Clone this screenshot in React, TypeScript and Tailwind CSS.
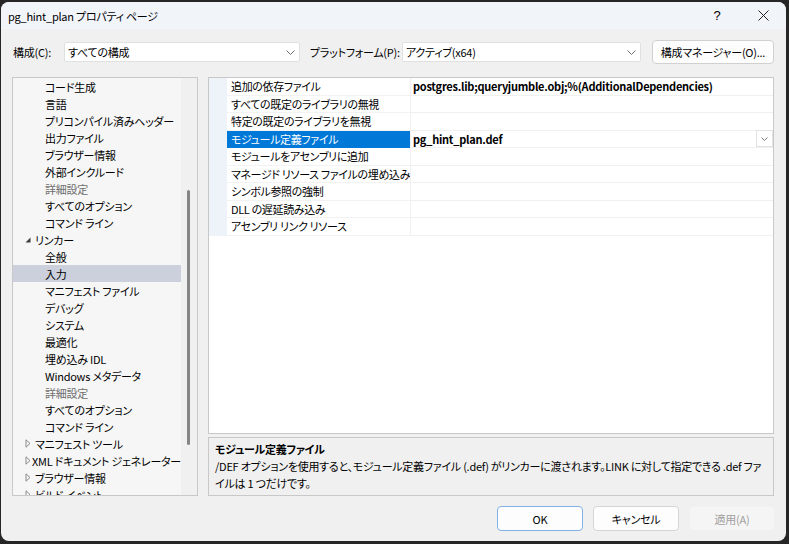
import React from "react";

const FONT = "font-['Noto_Sans_CJK_JP','Noto_Sans',sans-serif] [font-feature-settings:'palt'_1]";

type TreeItem = { t: string; l: 1 | 2; gray?: boolean; exp?: boolean; col?: boolean; sel?: boolean };

const tree: TreeItem[] = [
  { t: "コード生成", l: 2 },
  { t: "言語", l: 2 },
  { t: "プリコンパイル済みヘッダー", l: 2 },
  { t: "出力ファイル", l: 2 },
  { t: "ブラウザー情報", l: 2 },
  { t: "外部インクルード", l: 2 },
  { t: "詳細設定", l: 2, gray: true },
  { t: "すべてのオプション", l: 2 },
  { t: "コマンド ライン", l: 2 },
  { t: "リンカー", l: 1, exp: true },
  { t: "全般", l: 2 },
  { t: "入力", l: 2, sel: true },
  { t: "マニフェスト ファイル", l: 2 },
  { t: "デバッグ", l: 2 },
  { t: "システム", l: 2 },
  { t: "最適化", l: 2 },
  { t: "埋め込み IDL", l: 2 },
  { t: "Windows メタデータ", l: 2 },
  { t: "詳細設定", l: 2, gray: true },
  { t: "すべてのオプション", l: 2 },
  { t: "コマンド ライン", l: 2 },
  { t: "マニフェスト ツール", l: 1, col: true },
  { t: "XML ドキュメント ジェネレーター", l: 1, col: true },
  { t: "ブラウザー情報", l: 1, col: true },
  { t: "ビルド イベント", l: 1, col: true },
];

const props: { n: string; v: string; sel?: boolean }[] = [
  { n: "追加の依存ファイル", v: "postgres.lib;queryjumble.obj;%(AdditionalDependencies)" },
  { n: "すべての既定のライブラリの無視", v: "" },
  { n: "特定の既定のライブラリを無視", v: "" },
  { n: "モジュール定義ファイル", v: "pg_hint_plan.def", sel: true },
  { n: "モジュールをアセンブリに追加", v: "" },
  { n: "マネージド リソース ファイルの埋め込み", v: "" },
  { n: "シンボル参照の強制", v: "" },
  { n: "DLL の遅延読み込み", v: "" },
  { n: "アセンブリ リンク リソース", v: "" },
];

function Chevron() {
  return (
    <svg width="9" height="5" viewBox="0 0 9 5" className="shrink-0">
      <polyline points="0.5,0.5 4.5,4.5 8.5,0.5" fill="none" stroke="#707070" strokeWidth="1" />
    </svg>
  );
}

const T = "text-[11px] leading-[16px] tracking-[-0.25px]";

function Select({ w, text }: { w: string; text: string }) {
  return (
    <div className={`${w} h-[20px] bg-white border border-[#e0e0e0] rounded-[2px] flex items-center justify-between pl-[3px] pr-[4px]`}>
      <span className={`${T} text-black whitespace-nowrap`}>{text}</span>
      <Chevron />
    </div>
  );
}

export default function App() {
  return (
    <div className={`w-[789px] h-[544px] bg-[#262626] pt-[2px] pl-[1px] overflow-hidden ${FONT}`}>
      <div className="w-[785px] h-[539px] rounded-[8px] bg-[#f0f0f0] flex flex-col overflow-hidden">
        {/* Title bar */}
        <div className="h-[27px] shrink-0 bg-[#f1f4f9] flex items-center justify-between pl-[7px]">
          <span className={`${T} text-black whitespace-nowrap`}>pg_hint_plan プロパティ ページ</span>
          <div className="flex items-center h-full">
            <span className="w-[46px] text-center text-[13px] leading-[16px] text-black font-['Liberation_Sans',sans-serif]">?</span>
            <div className="w-[46px] flex justify-center">
              <svg width="11" height="11" viewBox="0 0 11 11">
                <line x1="0.5" y1="0.5" x2="10.5" y2="10.5" stroke="#222" strokeWidth="1" />
                <line x1="10.5" y1="0.5" x2="0.5" y2="10.5" stroke="#222" strokeWidth="1" />
              </svg>
            </div>
          </div>
        </div>

        {/* Configuration row */}
        <div className="mt-[11px] h-[24px] pl-[11px] flex items-center shrink-0">
          <span className={`w-[52px] pl-[1px] ${T} text-black whitespace-nowrap`}>構成(C):</span>
          <Select w="w-[236px]" text="すべての構成" />
          <span className={`ml-[10px] w-[92px] ${T} text-black whitespace-nowrap`}>プラットフォーム(P):</span>
          <Select w="w-[239px]" text="アクティブ(x64)" />
          <div className={`ml-[11px] w-[122px] h-[24px] bg-[#fdfdfd] border border-[#d0d0d0] rounded-[4px] flex items-center justify-center ${T} text-black whitespace-nowrap`}>
            構成マネージャー(O)...
          </div>
        </div>

        {/* Main panels */}
        <div className="mt-[13px] pl-[11px] flex gap-[10px] shrink-0">
          {/* Tree */}
          <div className="w-[186px] h-[419px] border border-[#c8c8c8] bg-[#f6f6f6] flex">
            <div className="w-[168px] overflow-hidden">
              {tree.map((it, i) => (
                <div
                  key={i}
                  className={`h-[17px] flex items-center ${T} whitespace-nowrap ${it.sel ? "bg-[#ccd0dd]" : ""} ${it.gray ? "text-[#6e6e6e]" : "text-black"} ${it.l === 2 ? "pl-[32px]" : "pl-[12px]"}`}
                >
                  {it.l === 1 && (
                    <span className="w-[10px] h-[17px] flex items-center">
                      {it.exp ? (
                        <svg width="6" height="6" viewBox="0 0 6 6">
                          <polygon points="5.5,0.5 5.5,5.5 0.5,5.5" fill="#3c3c3c" />
                        </svg>
                      ) : (
                        <svg width="6" height="9" viewBox="0 0 6 9">
                          <polygon points="1,0.8 5,4.5 1,8.2" fill="none" stroke="#8a8a8a" strokeWidth="1" />
                        </svg>
                      )}
                    </span>
                  )}
                  <span>{it.t}</span>
                </div>
              ))}
            </div>
            <div className="w-[16px] bg-[#f0f0f0] relative">
              <div className="absolute left-[6px] top-[112px] w-[3px] h-[255px] rounded-[2px] bg-[#858585]" />
            </div>
          </div>

          {/* Right column */}
          <div className="w-[566px] flex flex-col gap-[3px]">
            <div className="h-[357px] border border-[#c8c8c8] bg-white">
              {props.map((p, i) => (
                <div key={i} className="h-[17.5px] flex">
                  <div className="w-[18px] bg-[#eef3fa]" />
                  <div
                    className={`w-[183px] flex items-center pl-[4px] ${T} tracking-[-0.35px] whitespace-nowrap ${p.sel ? "bg-[#0078d7] text-white" : "text-black border-b border-[#f2f2f2]"}`}
                  >
                    {p.n}
                  </div>
                  <div className={`flex-1 flex items-center justify-between pl-[2px] border-l border-[#f0f0f0] border-b border-b-[#f0f0f0] ${T} font-bold text-black whitespace-nowrap`}>
                    <span>{p.v}</span>
                    {p.sel && (
                      <div className="w-[17px] h-[17px] bg-white border border-[#e3e3e3] flex items-center justify-center">
                        <svg width="7" height="4" viewBox="0 0 7 4">
                          <polyline points="0.5,0.5 3.5,3.5 6.5,0.5" fill="none" stroke="#808080" strokeWidth="1" />
                        </svg>
                      </div>
                    )}
                  </div>
                </div>
              ))}
            </div>
            <div className="h-[59px] border border-[#c8c8c8] bg-[#f0f0f0] pl-[6px] pt-[2px]">
              <div className={`h-[17px] flex items-center ${T} font-bold text-black`}>モジュール定義ファイル</div>
              <div className={`h-[17px] flex items-center ${T} text-black whitespace-nowrap`}>
                /DEF オプションを使用すると、モジュール定義ファイル (.def) がリンカーに渡されます。LINK に対して指定できる .def ファ
              </div>
              <div className={`h-[17px] flex items-center ${T} text-black whitespace-nowrap`}>イルは 1 つだけです。</div>
            </div>
          </div>
        </div>

        {/* Buttons */}
        <div className="mt-[10px] pr-[11px] flex justify-end gap-[10px] shrink-0">
          <div className={`w-[86px] h-[25px] bg-[#fdfdfd] border border-[#7fb2e5] rounded-[4px] flex items-center justify-center ${T} text-black`}>
            OK
          </div>
          <div className={`w-[86px] h-[25px] bg-[#fdfdfd] border border-[#d5d5d5] rounded-[4px] flex items-center justify-center ${T} text-black`}>
            キャンセル
          </div>
          <div className={`w-[86px] h-[25px] bg-[#f5f5f5] border border-[#f0f0f0] rounded-[4px] flex items-center justify-center ${T} text-[#a0a0a0]`}>
            適用(A)
          </div>
        </div>
      </div>
    </div>
  );
}
